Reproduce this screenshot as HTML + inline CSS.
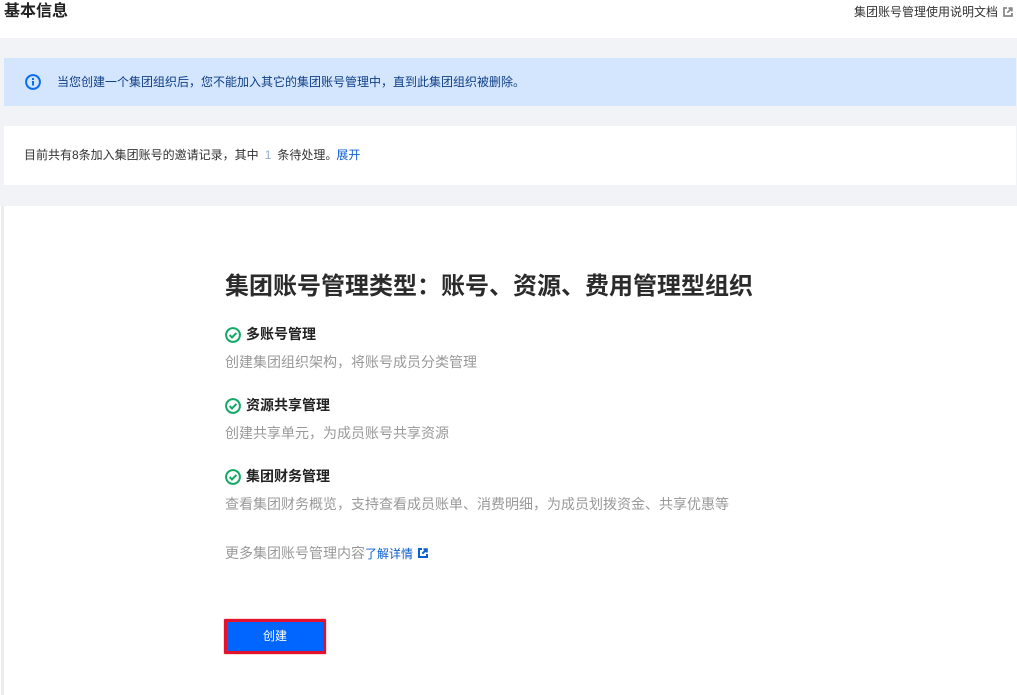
<!DOCTYPE html>
<html><head><meta charset="utf-8">
<style>
*{margin:0;padding:0;box-sizing:border-box}
html,body{width:1017px;height:695px;overflow:hidden;background:#fff}
body{position:relative;font-family:"Liberation Sans","Noto Sans CJK SC",sans-serif;color:#333}
.a{position:absolute;white-space:nowrap}
.t{font-size:12px;line-height:20px}
.f{font-size:14px;line-height:20px;font-weight:700;color:#222}
.g{font-size:14px;line-height:20px;color:#999}
svg{position:absolute;display:block}
</style></head><body>
<div class="a" style="left:0;top:38px;width:1017px;height:168px;background:#f2f3f7"></div>
<div class="a" style="left:4px;top:58px;width:1012px;height:48px;background:#d4e5fe"></div>
<div class="a" style="left:4px;top:126px;width:1012px;height:59px;background:#fff"></div>
<div class="a" style="left:1px;top:206px;width:3px;height:489px;background:#ececee"></div>
<div class="a" style="left:4px;top:206px;width:1013px;height:489px;background:#fff"></div>

<div class="a" style="left:4px;top:1px;font-size:16px;line-height:22px;font-weight:700;color:#222">基本信息</div>
<div class="a t" style="left:854px;top:2px;color:#333;font-size:12px">集团账号管理使用说明文档</div>
<svg style="left:1003px;top:7px" width="10" height="10" viewBox="0 0 10 10" fill="none" stroke="#888" stroke-width="1.8"><path d="M4 1H1v8h8V6M5.5 1.2h3.3v3.3M8.6 1.4 4.3 5.7"/></svg>

<svg style="left:25px;top:74px" width="16" height="16" viewBox="0 0 16 16" fill="none"><circle cx="8" cy="8" r="6.9" stroke="#0a6cf0" stroke-width="2"/><path d="M8 7v4.5" stroke="#0a6cf0" stroke-width="2"/><rect x="7" y="4" width="2" height="2" fill="#0a6cf0"/></svg>
<div class="a t" style="left:57px;top:72px;color:#0f3f85">当您创建一个集团组织后，您不能加入其它的集团账号管理中，直到此集团组织被删除。</div>

<div class="a t" style="left:24px;top:145px;color:#333">目前共有8条加入集团账号的邀请记录，其中<span style="color:#8fadcf;padding:0 6px 0 6px">1</span>条待处理。<span style="color:#0a5fd0;margin-left:-1px">展开</span></div>

<div class="a" style="left:225px;top:271px;font-size:24px;line-height:32px;font-weight:700;color:#2b2b2b">集团账号管理类型：账号、资源、费用管理型组织</div>

<svg style="left:225px;top:327px" width="16" height="16" viewBox="0 0 16 16" fill="none" stroke="#12a866" stroke-width="2"><circle cx="8" cy="8" r="6.9"/><path d="M4.6 8l2.4 2.4 4.4-4.4"/></svg>
<div class="a f" style="left:246px;top:324px">多账号管理</div>
<div class="a g" style="left:225px;top:352px">创建集团组织架构，将账号成员分类管理</div>

<svg style="left:225px;top:398px" width="16" height="16" viewBox="0 0 16 16" fill="none" stroke="#12a866" stroke-width="2"><circle cx="8" cy="8" r="6.9"/><path d="M4.6 8l2.4 2.4 4.4-4.4"/></svg>
<div class="a f" style="left:246px;top:395px">资源共享管理</div>
<div class="a g" style="left:225px;top:423px">创建共享单元，为成员账号共享资源</div>

<svg style="left:225px;top:469px" width="16" height="16" viewBox="0 0 16 16" fill="none" stroke="#12a866" stroke-width="2"><circle cx="8" cy="8" r="6.9"/><path d="M4.6 8l2.4 2.4 4.4-4.4"/></svg>
<div class="a f" style="left:246px;top:466px">集团财务管理</div>
<div class="a g" style="left:225px;top:494px">查看集团财务概览，支持查看成员账单、消费明细，为成员划拨资金、共享优惠等</div>

<div class="a g" style="left:225px;top:543px">更多集团账号管理内容<span style="color:#0a5fd0;font-size:12px;">了解详情</span></div>
<svg style="left:418px;top:548px" width="10" height="10" viewBox="0 0 10 10" fill="none" stroke="#0a5fd0" stroke-width="2"><path d="M4 1H1v8h8V6M5.5 1.2h3.3v3.3M8.6 1.4 4.3 5.7"/></svg>

<div class="a" style="left:224px;top:619px;width:102px;height:35px;background:#0066ff;border:3px solid #e4132d;border-radius:1px;box-shadow:0 0 1px #e4132d;color:#fff;font-size:12px;line-height:29px;text-align:center">创建</div>
</body></html>
